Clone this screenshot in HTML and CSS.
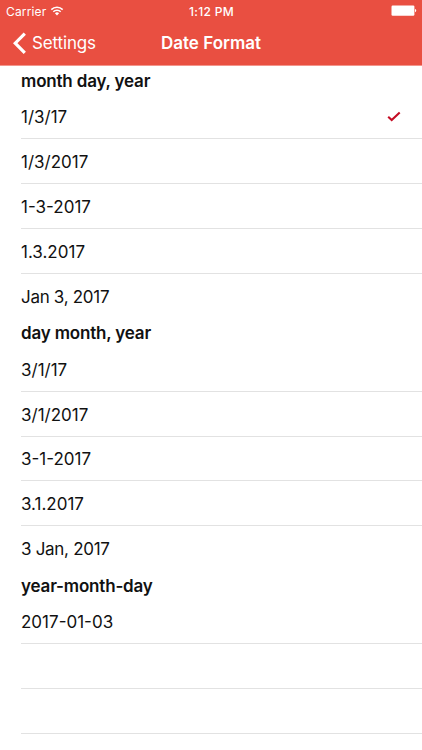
FILE: index.html
```html
<!DOCTYPE html>
<html lang="en">
<head>
<meta charset="utf-8">
<title>Date Format</title>
<link rel="stylesheet" href="styles.css">
</head>
<body>
<header class="top">
  <div class="status">
    <div class="carrier">
      <span>Carrier</span>
      <svg class="wifi" viewBox="0 0 14 10" width="14" height="10">
        <path d="M1.3 3.6a8 8 0 0 1 11.4 0M3.3 5.8a5.2 5.2 0 0 1 7.4 0" fill="none" stroke="#fff" stroke-width="1.5"/>
        <path d="M4.9 7.3a3 3 0 0 1 4.2 0L7 9.6z" fill="#fff"/>
      </svg>
    </div>
    <span class="clock">1:12 PM</span>
    <svg class="battery" viewBox="0 0 26 12" width="26" height="12">
      <rect x="0.5" y="0.5" width="22.9" height="10.3" rx="1.2" fill="#fff"/>
      <path d="M24 4.1c1.7.3 1.7 2.8 0 3.1z" fill="#fff"/>
    </svg>
  </div>
  <nav class="nav">
    <a class="back">
      <svg viewBox="0 0 13 22" width="13" height="22"><path d="M11.8 1.6L2.2 11.2l9.6 9.6" fill="none" stroke="#fff" stroke-width="3.2"/></svg>
      <span>Settings</span>
    </a>
    <h1>Date Format</h1>
  </nav>
</header>
<main>
  <section>
    <h2>month day, year</h2>
    <ul>
      <li><span>1/3/17</span><svg class="check" viewBox="0 0 14 11" width="14" height="11"><path d="M1.2 5.8l3.5 3.3L12.7 1.6" fill="none" stroke="#c40d25" stroke-width="2.1"/></svg></li>
      <li>1/3/2017</li>
      <li>1-3-2017</li>
      <li>1.3.2017</li>
      <li class="named">Jan 3, 2017</li>
    </ul>
  </section>
  <section>
    <h2>day month, year</h2>
    <ul>
      <li>3/1/17</li>
      <li>3/1/2017</li>
      <li>3-1-2017</li>
      <li>3.1.2017</li>
      <li class="named">3 Jan, 2017</li>
    </ul>
  </section>
  <section>
    <h2>year-month-day</h2>
    <ul>
      <li>2017-01-03</li>
      <li></li>
      <li></li>
      <li></li>
    </ul>
  </section>
</main>
</body>
</html>
```
FILE: styles.css
```css
* { box-sizing: border-box; margin: 0; padding: 0; }

body {
  width: 422px;
  height: 750px;
  overflow: hidden;
  background: #fff;
  color: #111;
  font-family: Inter, "Liberation Sans", sans-serif;
  font-size: 17px;
}

.top {
  height: 66px;
  background: #e94f41;
  border-bottom: 1px solid #f3958c;
  color: #fff;
}

.status {
  display: grid;
  grid-template-columns: 1fr auto 1fr;
  align-items: center;
  height: 22px;
  padding: 0 5px 0 6px;
  font-size: 12px;
}

.carrier { display: flex; align-items: center; gap: 4px; letter-spacing: 0.15px; }
.carrier svg { margin-top: -1px; }
.clock { font-weight: 500; letter-spacing: 0.3px; }
.battery { justify-self: end; }

.nav {
  display: grid;
  grid-template-columns: 1fr auto 1fr;
  align-items: center;
  height: 42px;
}

.back { display: flex; align-items: center; gap: 6px; padding-left: 13px; letter-spacing: -0.15px; }

h1 { font-size: 17px; font-weight: 600; letter-spacing: 0; }

h2 {
  height: 28.5px;
  padding-left: 21px;
  font-size: 17px;
  font-weight: 600;
  line-height: 30px;
  letter-spacing: -0.18px;
}

ul { list-style: none; padding-left: 21px; }

li {
  display: flex;
  align-items: center;
  justify-content: space-between;
  height: 44.8px;
  padding: 2px 21px 0 0;
  border-bottom: 1px solid #e2e2e2;
  letter-spacing: 0;
}

li:last-child { border-bottom-color: transparent; }

.named { letter-spacing: -0.3px; }
.check { margin-top: -2px; }
```
